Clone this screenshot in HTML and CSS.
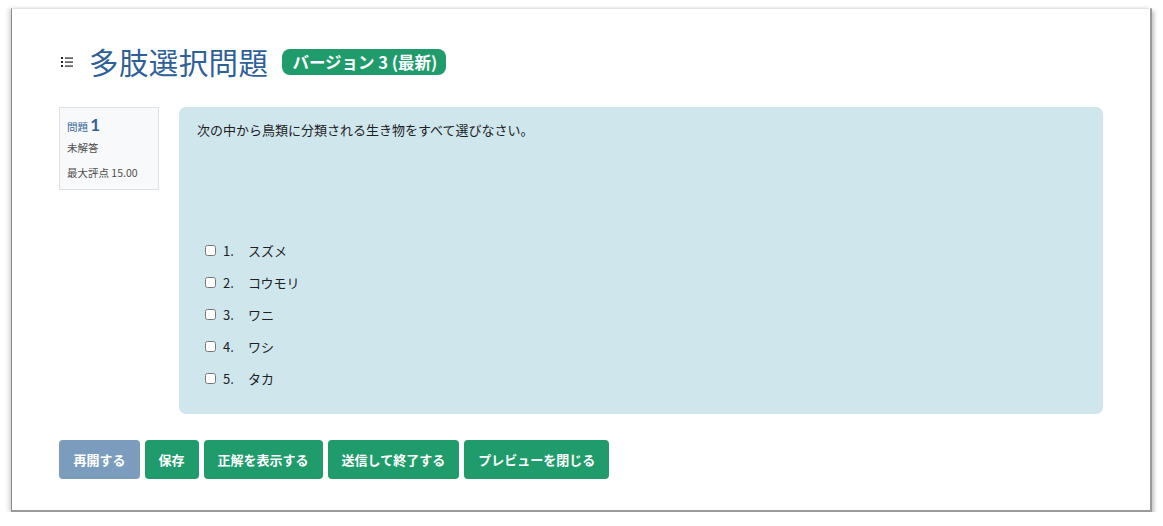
FILE: index.html
```html
<!DOCTYPE html>
<html lang="ja">
<head>
<meta charset="utf-8">
<link rel="stylesheet" href="styles.css">
</head>
<body>
<div class="frame">
  <div class="header">
    <svg class="list-icon" width="12" height="10" viewBox="0 0 12 10">
      <rect x="0" y="0" width="2" height="2" fill="#222"/>
      <rect x="4" y="0.5" width="8" height="1.2" fill="#222"/>
      <rect x="0" y="4" width="2" height="2" fill="#222"/>
      <rect x="4" y="4.5" width="8" height="1.2" fill="#222"/>
      <rect x="0" y="8" width="2" height="2" fill="#222"/>
      <rect x="4" y="8.5" width="8" height="1.2" fill="#222"/>
    </svg>
    <h1 class="title">多肢選択問題</h1>
    <span class="badge">バージョン 3 (最新)</span>
  </div>
  <div class="question">
    <div class="info">
      <div class="qno">問題 <span class="num">1</span></div>
      <div class="state">未解答</div>
      <div class="grade">最大評点 15.00</div>
    </div>
    <div class="content">
      <p class="qtext">次の中から鳥類に分類される生き物をすべて選びなさい。</p>
      <div class="answers">
        <label class="opt"><input type="checkbox"><span class="ono">1.</span><span>スズメ</span></label>
        <label class="opt"><input type="checkbox"><span class="ono">2.</span><span>コウモリ</span></label>
        <label class="opt"><input type="checkbox"><span class="ono">3.</span><span>ワニ</span></label>
        <label class="opt"><input type="checkbox"><span class="ono">4.</span><span>ワシ</span></label>
        <label class="opt"><input type="checkbox"><span class="ono">5.</span><span>タカ</span></label>
      </div>
    </div>
  </div>
  <div class="buttons">
    <button class="btn btn-muted">再開する</button>
    <button class="btn">保存</button>
    <button class="btn">正解を表示する</button>
    <button class="btn">送信して終了する</button>
    <button class="btn">プレビューを閉じる</button>
  </div>
</div>
</body>
</html>
```

FILE: styles.css
```css
html, body {
  margin: 0;
  padding: 0;
  background: #ffffff;
}
body {
  font-family: "Lato", "Noto Sans CJK JP", sans-serif;
  color: #1d2125;
}
.frame {
  box-sizing: border-box;
  margin: 8px 0 0 11px;
  width: 1141px;
  height: 504px;
  background: #fff;
  border-top: 1px solid #e4e4e4;
  border-left: 1px solid #8a8a8a;
  border-right: 2px solid #9a9a9a;
  border-bottom: 2px solid #9a9a9a;
  box-shadow: -3px 0 4px rgba(0,0,0,0.12), 2px 3px 4px rgba(0,0,0,0.25);
  padding: 33px 0 0 47px;
}
.header {
  display: flex;
  align-items: center;
  height: 38px;
}
.list-icon {
  margin: 2px 16px 0 2px;
}
.title {
  margin: 0;
  font-family: "Noto Sans CJK JP", sans-serif;
  font-weight: 400;
  font-size: 29.5px;
  line-height: 38px;
  color: #2f5f98;
  letter-spacing: 0.4px;
}
.badge {
  margin-left: 14px;
  margin-top: 1px;
  background: #1f9b6c;
  color: #fff;
  font-family: "Noto Sans CJK JP", sans-serif;
  font-weight: 700;
  font-size: 16.5px;
  line-height: 26px;
  height: 26px;
  padding: 0 9px 0 10px;
  border-radius: 8px;
}
.question {
  display: flex;
  margin-top: 27px;
}
.info {
  box-sizing: border-box;
  width: 100px;
  height: 83px;
  background: #f8f9fa;
  border: 1px solid #dee2e6;
  padding: 8px 0 0 7px;
  font-family: "Noto Sans CJK JP", sans-serif;
  font-size: 10.5px;
  color: #555;
}
.qno {
  color: #2f5f98;
  line-height: 18px;
}
.qno .num {
  font-family: "Lato", sans-serif;
  font-size: 17px;
  font-weight: 700;
}
.state {
  margin-top: 5px;
  line-height: 14px;
}
.grade {
  margin-top: 11px;
  line-height: 14px;
}
.grade, .state { color: #4e4e4e; }
.content {
  box-sizing: border-box;
  margin-left: 20px;
  width: 924px;
  height: 307px;
  background: #cfe7ec;
  border-radius: 7px;
  padding: 14px 0 0 18px;
}
.qtext {
  margin: 0;
  font-family: "Noto Sans CJK JP", sans-serif;
  font-size: 13px;
  line-height: 18px;
  color: #1d2125;
}
.answers {
  margin-top: 95px;
  margin-left: 8px;
  display: flex;
  flex-direction: column;
}
.opt {
  display: flex;
  align-items: center;
  height: 32px;
  font-family: "Noto Sans CJK JP", sans-serif;
  font-size: 13px;
  color: #1d2125;
}
.opt input {
  margin: 0 7px 0 0;
  width: 11px;
  height: 11px;
}
.ono {
  width: 25px;
  font-family: "Noto Sans CJK JP", sans-serif;
}
.buttons {
  display: flex;
  gap: 5px;
  margin-top: 26px;
}
.btn {
  height: 39px;
  border: none;
  border-radius: 4px;
  background: #1f9b6c;
  color: #fff;
  font-family: "Noto Sans CJK JP", sans-serif;
  font-weight: 700;
  font-size: 13px;
  padding: 0 14px;
  cursor: pointer;
}
.btn-muted {
  background: #7b9cbd;
  padding: 0 14px 0 14.5px;
}
```
